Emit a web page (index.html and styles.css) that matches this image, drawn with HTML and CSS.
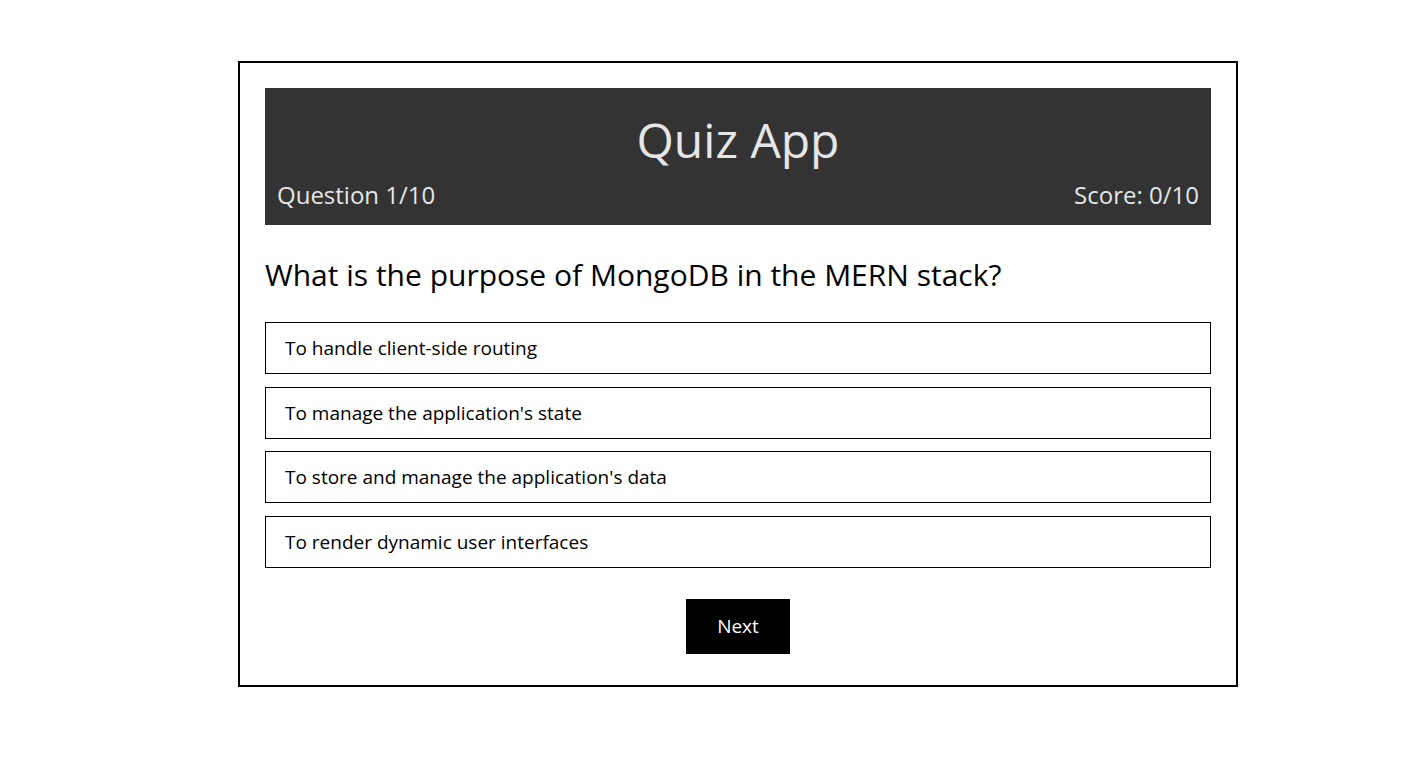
FILE: index.html
```html
<!DOCTYPE html>
<html lang="en">
<head>
<meta charset="utf-8">
<title>Quiz App</title>
<link rel="stylesheet" href="styles.css">
</head>
<body>
<div class="quiz">
  <header class="quiz-header">
    <h1 class="quiz-title">Quiz App</h1>
    <div class="quiz-meta">
      <span>Question 1/10</span>
      <span>Score: 0/10</span>
    </div>
  </header>
  <h2 class="question">What is the purpose of MongoDB in the MERN stack?</h2>
  <div class="options">
    <div class="option">To handle client-side routing</div>
    <div class="option">To manage the application's state</div>
    <div class="option">To store and manage the application's data</div>
    <div class="option">To render dynamic user interfaces</div>
  </div>
  <div class="actions">
    <button class="next-btn">Next</button>
  </div>
</div>
</body>
</html>
```
FILE: styles.css
```css
* { box-sizing: border-box; }
html, body { margin: 0; padding: 0; background: #fff; }
body {
  font-family: "Open Sans", "Noto Sans", sans-serif;
  color: #000;
  padding-top: 61px;
}
.quiz {
  width: 1000px;
  margin: 0 0 0 238px;
  border: 2px solid #000;
  padding: 25px 25px 31px;
}
.quiz-header {
  background: #333333;
  color: #e6e6e6;
  padding: 22px 12px 14px;
}
.quiz-title {
  margin: 0 0 9px;
  font-size: 48px;
  font-weight: 400;
  line-height: 60px;
  text-align: center;
}
.quiz-meta {
  display: flex;
  justify-content: space-between;
  font-size: 24px;
  line-height: 32px;
}
.question {
  margin: 30px 0 27px;
  font-size: 30px;
  font-weight: 400;
  line-height: 40px;
}
.options {
  display: flex;
  flex-direction: column;
  gap: 12.67px;
}
.option {
  height: 52px;
  border: 1px solid #000;
  padding: 0 19px;
  display: flex;
  align-items: center;
  font-size: 19px;
}
.actions {
  display: flex;
  justify-content: center;
  margin-top: 31px;
}
.next-btn {
  width: 104px;
  height: 55px;
  border: none;
  background: #000;
  color: #fff;
  font-family: inherit;
  font-size: 19px;
  cursor: pointer;
}
```
